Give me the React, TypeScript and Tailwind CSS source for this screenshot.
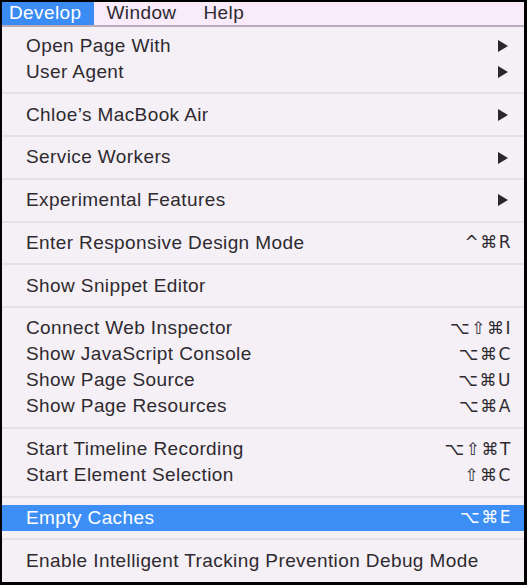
type Item = { label: string; shortcut?: string; submenu?: boolean; active?: boolean };

const groups: Item[][] = [
  [
    { label: "Open Page With", submenu: true },
    { label: "User Agent", submenu: true },
  ],
  [{ label: "Chloe’s MacBook Air", submenu: true }],
  [{ label: "Service Workers", submenu: true }],
  [{ label: "Experimental Features", submenu: true }],
  [{ label: "Enter Responsive Design Mode", shortcut: "^⌘R" }],
  [{ label: "Show Snippet Editor" }],
  [
    { label: "Connect Web Inspector", shortcut: "⌥⇧⌘I" },
    { label: "Show JavaScript Console", shortcut: "⌥⌘C" },
    { label: "Show Page Source", shortcut: "⌥⌘U" },
    { label: "Show Page Resources", shortcut: "⌥⌘A" },
  ],
  [
    { label: "Start Timeline Recording", shortcut: "⌥⇧⌘T" },
    { label: "Start Element Selection", shortcut: "⇧⌘C" },
  ],
  [{ label: "Empty Caches", shortcut: "⌥⌘E", active: true }],
  [{ label: "Enable Intelligent Tracking Prevention Debug Mode" }],
];

function Row({ item }: { item: Item }) {
  return (
    <div
      className={`flex h-[26px] items-center justify-between pl-[24px] pr-[12px] ${
        item.active ? "bg-[#3d8ef5] text-white" : "text-[#2e2a30]"
      }`}
    >
      <span>{item.label}</span>
      {item.shortcut && (
        <span className="font-['DejaVu_Sans',sans-serif] text-[17px] tracking-[1.5px]">{item.shortcut}</span>
      )}
      {item.submenu && (
        <svg width="12" height="14" viewBox="0 0 12 14" className="mr-[3px]">
          <path d="M1 1 L11 7 L1 13 Z" fill="#2b282d" />
        </svg>
      )}
    </div>
  );
}

export default function App() {
  return (
    <div className="h-[585px] w-[527px] overflow-hidden border-b-[3px] border-l-[2px] border-r-[3px] border-t-[2px] border-black bg-[#f4f0f5] font-['Liberation_Sans',Arial,sans-serif] text-[19px] tracking-[0.4px]">
      <div className="flex h-[25px] items-center border-b-[2px] border-[#b9adb9] bg-[#f9ebfa]">
        <div className="flex h-full items-center bg-[#3a8cf4] pl-[7px] pr-[12px] text-white">Develop</div>
        <div className="pl-[13px] text-[#2e2a30]">Window</div>
        <div className="pl-[27px] text-[#2e2a30]">Help</div>
      </div>
      <div className="pt-[6px]">
        {groups.map((g, gi) => (
          <div key={gi}>
            {gi > 0 && (
              <div className="flex h-[16.75px] items-center">
                <div className="h-[2px] w-full bg-[#e4e0e5]" />
              </div>
            )}
            {g.map((item) => (
              <Row key={item.label} item={item} />
            ))}
          </div>
        ))}
      </div>
    </div>
  );
}
